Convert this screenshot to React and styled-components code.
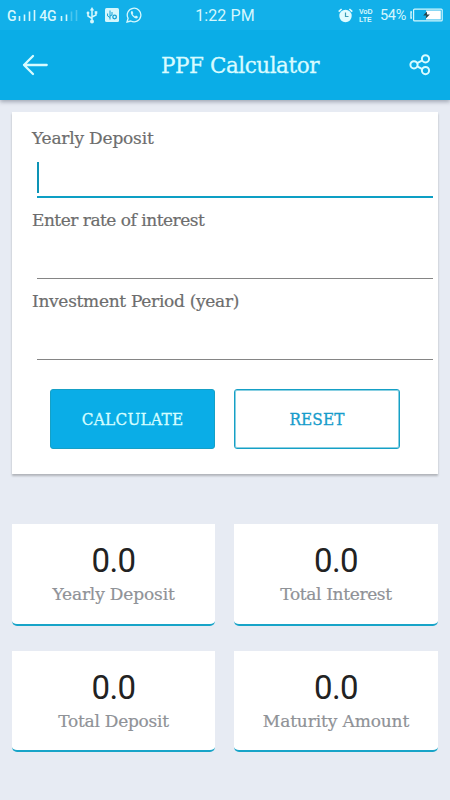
import React from "react";
import styled, { createGlobalStyle } from "styled-components";

const GlobalStyle = createGlobalStyle`
  * {
    box-sizing: border-box;
  }

  body {
    margin: 0;
    background: #e7ebf3;
  }
`;

const Screen = styled.div`
  width: 450px;
  height: 800px;
  overflow: hidden;
  background: #e7ebf3;
  font-family: Roboto, sans-serif;
`;

const TopArea = styled.div`
  height: 100px;
  background: #0aade7;
  box-shadow: 0 2px 4px rgba(60, 70, 90, 0.4);
`;

const StatusBar = styled.div`
  display: flex;
  justify-content: space-between;
  height: 30px;
  padding: 0 7px 0 7px;
  background: #12b0e9;
  color: #d5f7fd;
`;

const StatusGroup = styled.div`
  display: flex;
  align-items: center;
  flex: 1;
  justify-content: ${(props) => props.$justify || "flex-start"};

  svg {
    display: block;
    flex: none;
  }
`;

const StatusIcons = styled.div`
  display: flex;
  align-items: center;
  gap: 7px;
  margin-left: 6px;
`;

const Network = styled.span`
  width: ${(props) => props.$width}px;
  font-size: 14px;
  font-weight: 500;
  line-height: 30px;
  letter-spacing: -0.2px;
  padding-top: 2px;
`;

const Clock = styled.div`
  font-size: 16px;
  line-height: 31px;
  letter-spacing: 0.1px;
`;

const Volte = styled.div`
  display: flex;
  flex-direction: column;
  width: 15px;
  margin: 1px 6px 0 6px;
  font-family: "Liberation Sans", sans-serif;
  font-size: 7px;
  font-weight: 700;
  line-height: 8px;
`;

const Percent = styled.span`
  width: 29px;
  margin-right: 1px;
  padding-top: 1px;
  font-size: 14.5px;
  line-height: 30px;
  letter-spacing: -0.3px;
`;

const AppBar = styled.header`
  display: flex;
  align-items: center;
  justify-content: space-between;
  height: 70px;
  padding: 0 18px 0 21px;
`;

const IconButton = styled.button`
  display: flex;
  padding: 0;
  border: 0;
  background: none;
  color: #d8fbff;
`;

const Title = styled.h1`
  margin: 2px 0 0 23px;
  color: #d8fbff;
  font-family: "Roboto Slab", "DejaVu Serif", serif;
  font-size: 21.5px;
  font-weight: 400;
  line-height: 30px;
  letter-spacing: -0.45px;
  -webkit-text-stroke: 0.3px currentColor;
`;

const Main = styled.main`
  padding: 12px 12px 0;
`;

const FormCard = styled.form`
  height: 362px;
  margin-bottom: 50px;
  padding: 13px 5px 0 20px;
  background: #fff;
  box-shadow: 0 2px 2px rgba(0, 0, 0, 0.24);
`;

const Field = styled.label`
  display: flex;
  flex-direction: column;
  height: 81.5px;
`;

const Label = styled.span`
  display: block;
  color: ${(props) => (props.$muted ? "#8f9297" : "#6d6d6d")};
  font-family: "Roboto Slab", "DejaVu Serif", serif;
  font-size: 17px;
  line-height: 26px;
  letter-spacing: ${(props) => props.$spacing}px;
  -webkit-text-stroke: 0.2px currentColor;
`;

const FieldInput = styled.div`
  display: flex;
  align-items: center;
  height: ${(props) => (props.$focused ? 47 : 46)}px;
  margin-left: 5px;
  border-bottom: ${(props) =>
    props.$focused ? "2px solid #0d9fc4" : "1px solid #858585"};
`;

const Caret = styled.i`
  width: 2px;
  height: 31px;
  margin-top: 7px;
  background: #0d93b5;
`;

const Actions = styled.div`
  display: flex;
  gap: 19px;
  margin-top: 19.5px;
  padding-left: 18px;
`;

const ActionButton = styled.button`
  width: 165px;
  height: 60px;
  padding: 0;
  border: 1px solid #15a0c6;
  border-radius: 3px;
  background: #0aade7;
  color: #d4fdff;
  font-family: "Roboto Slab", "DejaVu Serif Condensed", "DejaVu Serif", serif;
  font-stretch: condensed;
  font-size: 17px;
  letter-spacing: 0.28px;
  -webkit-text-stroke: 0.3px currentColor;
`;

const OutlineButton = styled(ActionButton)`
  width: 166px;
  background: #fff;
  box-shadow: inset 0 0 0 1px #8ad0e2;
  color: #179ccb;
  letter-spacing: 0.1px;
`;

const Results = styled.section`
  display: grid;
  grid-template-columns: 203px 204px;
  gap: 25px 19px;
`;

const ResultCard = styled.div`
  height: 101.5px;
  padding-top: 17px;
  border-bottom: 2px solid #18a4c8;
  border-radius: 0 0 5px 5px;
  background: #fff;
  text-align: center;
`;

const ResultValue = styled.div`
  color: #222;
  font-size: 33px;
  line-height: 40px;
  letter-spacing: -0.6px;
`;

const Signal = ({ weak }) => (
  <svg width="20" height="13" viewBox="0 0 20 13" fill="none" stroke="currentColor" strokeWidth="1.6">
    <path d="M1.5 7v5M6.5 5.5V12" />
    <path d="M11.5 2.5V12M16.5 1v11" opacity={weak ? 0.3 : 1} />
  </svg>
);

const UsbIcon = () => (
  <svg width="12" height="17" viewBox="0 0 12 17" fill="none" stroke="currentColor" strokeWidth="1.5">
    <path d="M6 2v12M6 11.5 2 9V6M6 10l4-2V5" />
    <path d="M6 0 8.2 3.5H3.8Z" fill="currentColor" stroke="none" />
    <circle cx="6" cy="14.5" r="2" fill="currentColor" stroke="none" />
    <circle cx="2" cy="6" r="1.4" fill="currentColor" stroke="none" />
    <path d="M8.7 4.2h2.6v2.6H8.7z" fill="currentColor" stroke="none" />
  </svg>
);

const DebugIcon = () => (
  <svg width="14" height="14" viewBox="0 0 14 14" fill="none" stroke="#12a0d5">
    <rect width="14" height="14" rx="1.5" fill="#d5f7fd" stroke="none" />
    <path d="M5 2.5v9M5 9.5 2.6 8V5.5M5 8l2-1V4" />
    <circle cx="9.6" cy="9" r="1.8" strokeWidth="1.3" />
  </svg>
);

const WhatsappIcon = () => (
  <svg width="16" height="16" viewBox="0 0 16 16" fill="none" stroke="currentColor" strokeWidth="1.3">
    <path d="M1 15l1.1-3.7A6.8 6.8 0 1 1 4.8 14Z" />
    <path
      d="M5.4 4.2c-1 .8-.7 2.6.8 4.5 1.8 2.3 4.3 3.4 5.3 2.2.5-.6.4-1.2.1-1.4L10 8.6l-1 .9C8 9.1 7 8.1 6.6 7.1l.7-.9-.8-1.9c-.2-.3-.7-.3-1.1-.1Z"
      fill="currentColor"
      stroke="none"
    />
  </svg>
);

const AlarmIcon = () => (
  <svg width="15" height="15" viewBox="0 0 15 15">
    <circle cx="7.5" cy="8" r="6.2" fill="#e0fbff" />
    <path d="M.7 3.6 3.6 1M14.3 3.6 11.4 1" stroke="#e0fbff" strokeWidth="1.6" />
    <path d="M7.5 4.5v4h3" fill="none" stroke="#3d9db5" strokeWidth="1.2" />
  </svg>
);

const BatteryIcon = () => (
  <svg width="33" height="14" viewBox="0 0 33 14">
    <path d="M2 4H1v6h1" fill="none" stroke="#d5f7fd" strokeWidth="1.4" />
    <rect x="3.6" y="1.1" width="28.6" height="11.8" rx="1" fill="none" stroke="#d5f7fd" strokeWidth="1.2" />
    <path d="M16 2.5h14.8v9H16z" fill="#fff" />
    <path d="M17 3.5 13.2 7.6h3l-.6 3.2 4.2-4.4h-2.9Z" fill="#20434c" />
  </svg>
);

const BackIcon = () => (
  <svg width="28" height="24" viewBox="0 0 28 24" fill="none" stroke="currentColor" strokeWidth="2.3" strokeLinecap="round" strokeLinejoin="round">
    <path d="M25.7 12H3M12 3 3 12l9 9" />
  </svg>
);

const ShareIcon = () => (
  <svg width="24" height="24" viewBox="0 0 24 24" fill="none" stroke="currentColor" strokeWidth="2">
    <circle cx="6" cy="11.8" r="3.6" />
    <circle cx="17.5" cy="5.8" r="3.6" />
    <circle cx="17.5" cy="17.6" r="3.6" />
    <path d="m9.2 10.1 5.1-2.7M9.2 13.4l5.1 2.7" />
  </svg>
);

const fields = [
  { name: "Yearly Deposit", spacing: -0.2 },
  { name: "Enter rate of interest", spacing: -0.5 },
  { name: "Investment Period (year)", spacing: -0.3 },
];

const results = [
  { name: "Yearly Deposit", value: 0, spacing: -0.15 },
  { name: "Total Interest", value: 0, spacing: -0.35 },
  { name: "Total Deposit", value: 0, spacing: -0.25 },
  { name: "Maturity Amount", value: 0, spacing: -0.12 },
];

const App = () => {
  return (
    <Screen>
      <GlobalStyle />
      <TopArea>
        <StatusBar>
          <StatusGroup>
            <Network $width={11}>G</Network>
            <Signal />
            <Network $width={22}>&#8202;4G</Network>
            <Signal weak />
            <StatusIcons>
              <UsbIcon />
              <DebugIcon />
              <WhatsappIcon />
            </StatusIcons>
          </StatusGroup>
          <Clock>1:22 PM</Clock>
          <StatusGroup $justify="flex-end">
            <AlarmIcon />
            <Volte>
              <span>VoD</span>
              <span>LTE</span>
            </Volte>
            <Percent>54%</Percent>
            <BatteryIcon />
          </StatusGroup>
        </StatusBar>
        <AppBar>
          <IconButton type="button" aria-label="Back">
            <BackIcon />
          </IconButton>
          <Title>PPF Calculator</Title>
          <IconButton type="button" aria-label="Share">
            <ShareIcon />
          </IconButton>
        </AppBar>
      </TopArea>

      <Main>
        <FormCard>
          {fields.map(({ name, spacing }, i) => (
            <Field key={name}>
              <Label $spacing={spacing}>{name}</Label>
              <FieldInput $focused={i === 0}>{i === 0 && <Caret />}</FieldInput>
            </Field>
          ))}
          <Actions>
            <ActionButton type="button">CALCULATE</ActionButton>
            <OutlineButton type="button">RESET</OutlineButton>
          </Actions>
        </FormCard>

        <Results>
          {results.map(({ name, value, spacing }) => (
            <ResultCard key={name}>
              <ResultValue>{value.toFixed(1)}</ResultValue>
              <Label $muted $spacing={spacing}>
                {name}
              </Label>
            </ResultCard>
          ))}
        </Results>
      </Main>
    </Screen>
  );
};

export default App;
